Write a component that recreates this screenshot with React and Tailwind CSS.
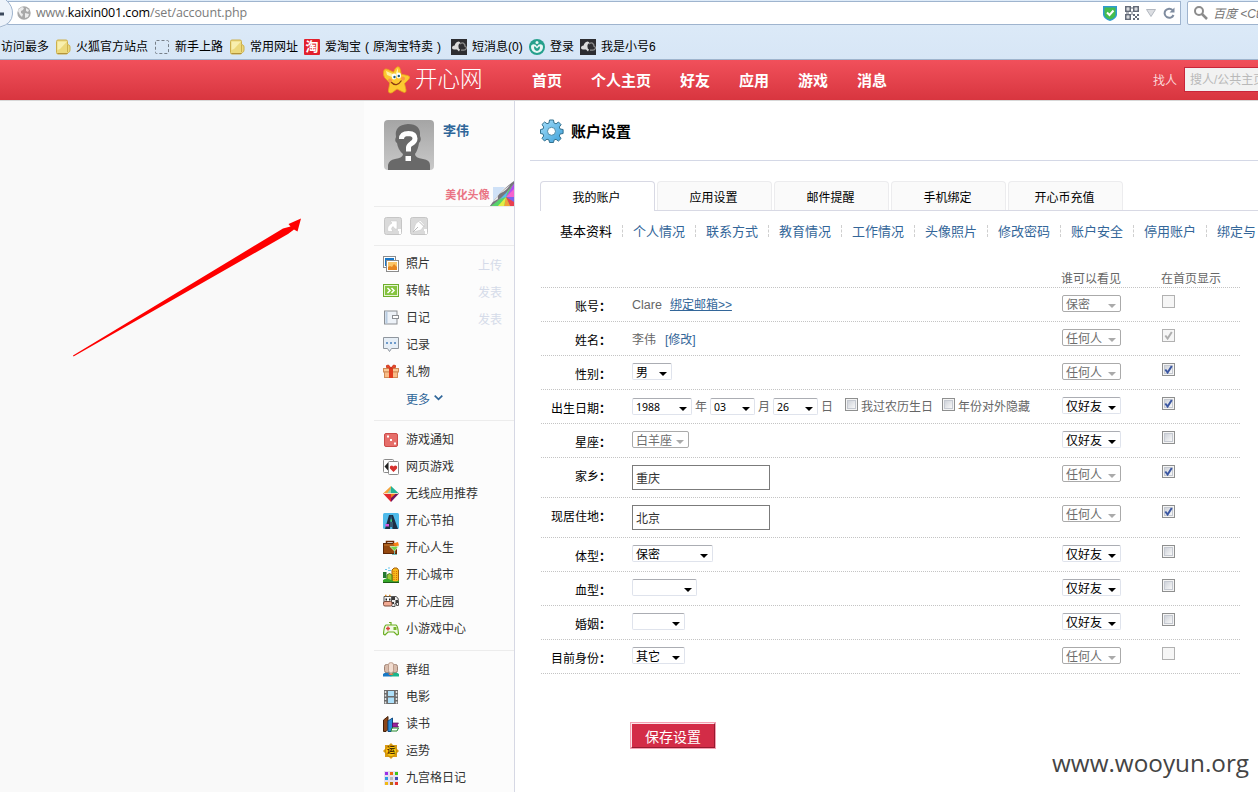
import React from "react";

const Svg = ({ w = 16, h = 16, className = "", children, vb }) => (
  <svg width={w} height={h} viewBox={vb || `0 0 ${w} ${h}`} className={`shrink-0 ${className}`}>
    {children}
  </svg>
);

/* ---------- bookmark icons ---------- */
const Folder = () => (
  <Svg w={15} h={16}>
    <path d="M.5 2.500q0-1.500 1.500-1.500h8q1.500 0 1.500 1.500v3l1.500.5q1 .5 1 2v3q0 2-1.500 2.500l-1 .5q0 1-1 1H2q-1.500 0-1.500-1.500z" fill="#ecd97c" stroke="#ccb04e" />
    <path d="M1.500 2.500h9.500L4 10l-2.500 1z" fill="#f8efae" />
    <path d="M11.500 6v7" stroke="#ccb04e" />
    <path d="M1.500 14.500h10" stroke="#b3933a" />
  </Svg>
);
const Dashed = () => (
  <Svg w={15} h={16}>
    <rect x=".5" y="1.500" width="13" height="13" rx="1" fill="none" stroke="#777f88" strokeDasharray="3 2" />
  </Svg>
);
const Tao = () => (
  <span className="flex h-4 w-4 shrink-0 items-center justify-center rounded-[1px] bg-[#e2202c] text-[13px] font-bold leading-none text-white">淘</span>
);
const Cloud = () => (
  <Svg>
    <rect width="16" height="16" fill="#2d2d31" />
    <path d="M8 12.500L6 10.500H3Q.8 10.500 1 8.500q.3-2 2.600-2Q4.500 3 7.500 2.500q1.500 0 2 1.500-2.500 1-2 4 0 2 1.500 2.500z" fill="#dcdcdc" />
    <path d="M9 5q2.500-2 4-.3 1.300 1.300.8 2.300 2 .6 1.500 2.500-.6 1.600-2.500 1.600H10" fill="none" stroke="#8b8b8b" strokeWidth="1.300" />
  </Svg>
);
const Teal = () => (
  <Svg>
    <circle cx="8" cy="8" r="8" fill="#25a08c" />
    <path d="M8 14Q2 13 2 8q0-2.800 2.700-2.800Q7 5.200 8 7.500q1-2.300 3.300-2.300Q14 5.200 14 8q0 5-6 6z" fill="#e8f7f4" />
    <path d="M5 8q0 3.500 3 4 3-.5 3-4-.5-1.500-1.500 0L8 9.500 6.500 8Q5.500 6.500 5 8z" fill="#25a08c" />
    <circle cx="8" cy="3.500" r="1.500" fill="#e8f7f4" />
  </Svg>
);

/* ---------- sidebar icons ---------- */
const Photo = () => (
  <Svg>
    <rect x=".5" y=".5" width="12" height="11" fill="#fff" stroke="#8c8c8c" />
    <rect x="2" y="2" width="9" height="8" fill="#1877c8" />
    <rect x="3.500" y="4.500" width="12" height="11" fill="#fff" stroke="#8c8c8c" />
    <rect x="5" y="6" width="9" height="8" fill="#fbc567" />
    <path d="M5 14v-3l2-1 2 1 2-3 3 3v3z" fill="#e78620" />
  </Svg>
);
const Repost = () => (
  <Svg>
    <rect x=".5" y="1.500" width="15" height="12" fill="#86c440" stroke="#6fae2c" />
    <rect x="1.500" y="2.500" width="13" height="10" fill="none" stroke="#e4f4d2" />
    <path d="M4.500 5L7 7.500 4.500 10M8.500 5L11 7.500 8.500 10" fill="none" stroke="#fff" strokeWidth="1.500" />
  </Svg>
);
const Diary = () => (
  <Svg>
    <rect x="1.500" y="1" width="12.500" height="13" fill="#edf2f8" stroke="#8b8f94" />
    <path d="M3.500 1.500v12" stroke="#b7cbe0" strokeWidth="2" />
    <rect x="9.500" y="5.500" width="6" height="3" fill="#fff" stroke="#8b8f94" />
  </Svg>
);
const Note = () => (
  <Svg>
    <path d="M.5.500h15v11H8.500l-2 3-2-3H.5z" fill="#e6eef6" stroke="#8f969e" />
    <path d="M3 5h2v2H3zM7 5h2v2H7zM11 5h2v2h-2z" fill="#6f9bcb" />
  </Svg>
);
const Gift = () => (
  <Svg>
    <rect x=".5" y="4.500" width="15" height="3.500" fill="#fbc896" stroke="#cf8b56" />
    <rect x="1.500" y="8" width="13" height="5.500" fill="#f9bd88" stroke="#cf8b56" />
    <rect x="6" y="4" width="4" height="10" fill="#e23c1e" />
    <path d="M8 4L3.500 3.500v-2L5.500 1zM8 4l4.500-.5v-2l-2-.5z" fill="#f04822" stroke="#c32b14" strokeWidth=".8" />
  </Svg>
);
const Dice = () => (
  <Svg>
    <rect x="1.500" y="1.500" width="13" height="13" rx="1.500" fill="#e66e6a" stroke="#cc4b49" />
    <path d="M4 3.500h2v2H4zM7 7h2v2H7zM11 10.500h2v2h-2z" fill="#fff" />
  </Svg>
);
const Cards = () => (
  <Svg>
    <rect x=".5" y=".5" width="10" height="13" rx="1" fill="#fff" stroke="#8b8b8b" />
    <path d="M1.500 7.500l3.500-4v8z" fill="#222" />
    <rect x="5.500" y="2.500" width="10" height="13" rx="1" fill="#fff" stroke="#8b8b8b" />
    <path d="M10.500 13L7 9.500Q6.300 6.500 9 6.500l1.500 1 1.500-1q2.700 0 2 3z" fill="#d6312e" />
  </Svg>
);
const Gem = () => (
  <Svg>
    <path d="M8 0L0 7.500h8z" fill="#f6a33b" />
    <path d="M8 0l8 7.500H8z" fill="#21b295" />
    <path d="M0 7.500h8V16z" fill="#e3292f" />
    <path d="M8 7.500h8L8 16z" fill="#75145f" />
    <path d="M4 7.500L8 2v5.500z" fill="#8fd4ae" />
    <path d="M8 7.500h5L8 12z" fill="#ef7c1c" />
    <path d="M1 7.500h14" stroke="#fff3cf" strokeWidth=".8" />
  </Svg>
);
const Beat = () => (
  <Svg>
    <rect width="16" height="16" rx="1.500" fill="#4fbaea" />
    <path d="M6 2h2L7 16H2zM8 2h2l5 14H9.500z" fill="#1d2f45" />
    <path d="M7 9h3v5H7z" fill="#35586f" />
    <path d="M7.500 6.500h1.500v2H7.500z" fill="#40d56b" />
    <path d="M2.500 11H6v2.500H2.500z" fill="#d952da" />
  </Svg>
);
const Life = () => (
  <Svg>
    <path d="M3.500 4V1.500h7V4" fill="none" stroke="#6b2c08" strokeWidth="1.500" />
    <rect x=".5" y="3.500" width="13" height="10" fill="#94480f" stroke="#5e2705" />
    <path d="M1 5h12" stroke="#c97a2d" />
    <path d="M7 6.500h8.500L11.500 11z" fill="#6ed84c" stroke="#d9f8ca" strokeWidth=".8" />
    <path d="M11.500 11v3" stroke="#72b9b4" />
    <path d="M9 14.500h5" stroke="#72b9b4" />
    <path d="M10 3.500l5-1.500 1 3.500-4 1z" fill="#f88416" />
  </Svg>
);
const City = () => (
  <Svg>
    <path d="M9 3l2-2h3l1.500 2v12H9z" fill="#f8b91d" stroke="#a55f0a" />
    <path d="M11 4v9M13.500 4v9" stroke="#d56c0c" strokeDasharray="1 1" />
    <path d="M4 8l2.500-1.500L9 8v7H4z" fill="#9cc93a" stroke="#4f7d12" />
    <path d="M0 5h3.500v6H0z" fill="#247831" />
    <path d="M0 13q3-3 8 0t8 0v3H0z" fill="#35a629" />
    <path d="M2 2.500h2M5 1h2M5 3.500h3" stroke="#6cc8eb" />
    <path d="M0 15.500h16" stroke="#1c5a16" />
  </Svg>
);
const Cow = () => (
  <Svg>
    <path d="M6 2.500h7q2.500 1 2.500 4v5h-2v-2h-1.500v3H9z" fill="#eee" stroke="#555" />
    <path d="M9 3h3v3H9zM12.500 6H15v3h-2.500zM9 8h2v2H9z" fill="#3a3a3a" />
    <path d="M1 2.500h7.500v7H1z" fill="#fafafa" stroke="#555" />
    <path d="M2.500 4.500H4v2H2.500zM6 4.500h1.500v2H6z" fill="#222" />
    <rect x=".5" y="7.500" width="8.500" height="4.500" rx="1.500" fill="#f2ab94" stroke="#7c4a3b" />
    <path d="M2 1.500h1.500M6 1.500h1.500" stroke="#e29125" strokeWidth="1.500" />
  </Svg>
);
const Pad = () => (
  <Svg>
    <path d="M3 4h10q2 1 2.500 9l-1.500 1-3-3H5l-3 3-1.500-1Q1 5 3 4z" fill="#f1fae6" stroke="#6cae23" strokeWidth="1.200" />
    <path d="M8 4V1.500H6" fill="none" stroke="#6cae23" strokeWidth="1.200" />
    <path d="M5 5.500v4M3 7.500h4" stroke="#d9443e" strokeWidth="1.500" />
    <path d="M10.500 6h3v3h-3z" fill="#77b52c" />
  </Svg>
);
const Group = () => (
  <Svg>
    <path d="M0 14.500V12l3-2h4l1.500 4.500z" fill="#1878c4" />
    <path d="M7.500 14.500L9 10h4l3 2v2.500z" fill="#19b58c" />
    <path d="M5 11.500h6L9.500 13h-3z" fill="#e9783d" />
    <rect x="1.500" y="2.500" width="5" height="8" rx="2" fill="#d8bcac" stroke="#a08273" />
    <rect x="9.500" y="2.500" width="5" height="8" rx="2" fill="#d8bcac" stroke="#a08273" />
    <rect x="5.500" y=".7" width="5" height="10" rx="2" fill="#f1dcd0" stroke="#bd9d8c" />
  </Svg>
);
const Film = () => (
  <Svg>
    <rect x="1" y="1" width="14" height="14" fill="#6c6c6c" />
    <path d="M5 2h6v5H5zM5 8.500h6V14H5z" fill="#aee0fa" />
    <path d="M2.500 2v13M13.500 2v13" stroke="#e4e4e4" strokeWidth="1.500" strokeDasharray="2 1.500" />
  </Svg>
);
const Books = () => (
  <Svg>
    <path d="M.5 4L5 .5v13l-2 2H.5z" fill="#8b4619" stroke="#43200a" />
    <path d="M5 5l4.500-3v11L8 15.500H5z" fill="#2a8bd8" stroke="#134c82" />
    <path d="M9.500 7h6L14 9l1.500 2h-6z" fill="#9c219b" stroke="#550c56" strokeWidth=".7" />
    <path d="M9 12h6.500L14 15H8z" fill="#fff" stroke="#22862d" />
  </Svg>
);
const Luck = () => (
  <span className="relative flex h-4 w-4 shrink-0 items-center justify-center">
    <Svg className="absolute left-0 top-0">
      <path d="M8 0l2 2h4v4l2 2-2 2v4h-4l-2 2-2-2H2v-4L0 8l2-2V2h4z" fill="#d99b16" />
      <circle cx="8" cy="8" r="5.500" fill="#fdc60b" stroke="#b67d08" strokeWidth=".7" />
    </Svg>
    <span className="relative text-[8px] font-bold leading-none text-[#4a2d00]">运</span>
  </span>
);
const Nine = () => {
  const c = ["#9b30e6", "#ef6a12", "#3fc516", "#2b9fe0", "#b9b9b9", "#3f4db4", "#f0ba14", "#b8740a", "#e8352c"];
  return (
    <Svg>
      <path d="M1 1h14v14H1z" fill="#e6dff0" />
      {c.map((f, i) => (
        <rect key={i} x={2 + (i % 3) * 5} y={2 + Math.floor(i / 3) * 5} width="3" height="3" fill={f} />
      ))}
    </Svg>
  );
};

const Item = ({ icon, text, extra }) => (
  <div className="flex h-[27px] items-center">
    {icon}
    <span className="ml-[7px]">{text}</span>
    {extra && <span className="ml-auto mr-3 pt-1 text-[#d5dbe9]">{extra}</span>}
  </div>
);

/* ---------- form controls ---------- */
const Sel = ({ text, off, cls }) => (
  <div
    className={`flex h-[17px] shrink-0 items-center justify-between rounded-[2px] border bg-white pl-[3px] pr-[4px] leading-none ${
      off ? "border-[#aaaaaa] text-[#6d6d6d]" : "border-[#dfe3ec] border-t-[#abadb3] text-black"
    } ${cls}`}
  >
    <span className="whitespace-nowrap pt-[2px]">{text}</span>
    <Svg w={8} h={4} className="mt-[5px]">
      <path d="M0 0h8L4 4z" fill={off ? "#aaa" : "#000"} />
    </Svg>
  </div>
);
const Box = ({ on, off }) => (
  <div className={`flex h-[13px] w-[13px] shrink-0 items-center justify-center border ${off ? "border-[#b1b1b1] bg-[#f6f6f6]" : "border-[#8e8f8f] bg-[#f4f4f4]"}`}>
    <div className={`h-[9px] w-[9px] ${off ? "" : "border border-[#c5c9d1] bg-linear-to-br from-[#cfd3da] to-[#f8f8f8]"}`}>
      {on && (
        <Svg w={9} h={9} className={off ? "" : "-ml-px -mt-px"}>
          <path d="M1.300 4.500l2.300 3L7.800 1" fill="none" stroke={off ? "#aeaeae" : "#3b57a2"} strokeWidth="2" />
        </Svg>
      )}
    </div>
  </div>
);
const Field = ({ text }) => (
  <div className="flex h-[25px] w-[138px] items-center border border-[#7b7b7b] bg-white pl-[3px] pt-[3px] text-[#333]">{text}</div>
);

const Row = ({ label, children, who, whoOff, on, boxOff, tall }) => (
  <div className={`flex border-b border-dotted border-[#c4c4c4] ${tall ? "h-10" : "h-[34px]"}`}>
    <div className="w-[70px] shrink-0 whitespace-nowrap pt-[12px] text-right leading-[14px] text-black">
      {label}<span className="font-bold">：</span>
    </div>
    <div className="ml-[21px] flex w-[430px] shrink-0 items-start pt-[7px]">{children}</div>
    <div className="w-[100px] shrink-0 pt-[7px]">
      <Sel text={who} off={whoOff} cls="w-[59px]" />
    </div>
    <div className="pt-[7px]">
      <Box on={on} off={boxOff} />
    </div>
  </div>
);

const TABS = ["应用设置", "邮件提醒", "手机绑定", "开心币充值"];
const SUBS = ["基本资料", "个人情况", "联系方式", "教育情况", "工作情况", "头像照片", "修改密码", "账户安全", "停用账户", "绑定与"];

export default function App() {
  return (
    <div className="relative flex h-[792px] w-[1258px] flex-col overflow-hidden bg-white font-['Liberation_Sans','Noto_Sans_CJK_SC',sans-serif] text-xs text-[#333]">
      {/* browser chrome */}
      <div className="h-[60px] shrink-0 overflow-hidden border-b border-[#9fb4cd] bg-linear-to-b from-[#dfecf9] to-[#d7e6f6]">
        <div className="flex h-[26px] pt-px">
          <div className="relative flex h-6 w-[1181px] shrink-0 items-center border border-l-0 border-[#9fb4ce] bg-white">
            <Svg w={14} h={28} className="absolute -top-[2px] left-0">
              <path d="M0 0h6q7 6 6.500 14Q12 25 0 28z" fill="#edf3fa" />
              <path d="M6 0q7 6 6.500 14Q12 24 0 27" fill="none" stroke="#9fb4ce" />
              <path d="M0 14h4" stroke="#3d4a5c" strokeWidth="3" />
            </Svg>
            <Svg w={14} h={14} className="ml-[17px]">
              <circle cx="7" cy="7" r="6.700" fill="#a9a9a9" />
              <path d="M2 3l3-2 2 1-1 2-2 1v2l2 1-1 3-2-2-2-4zM9 2l3 2-1 2-2-1zM8 7l4 1-1 3-3 1z" fill="#ececec" />
            </Svg>
            <span className="ml-[5px] whitespace-nowrap pt-px font-['Open_Sans','Noto_Sans',sans-serif] text-[12.500px] tracking-[-0.13px] text-[#7b7b7b]">
              www.<span className="text-black">kaixin001.com</span>/set/account.php
            </span>
            <div className="ml-auto flex items-center pr-[5px]">
              <Svg w={14} h={15}>
                <path d="M0 0h14v9q-1 4-7 6Q1 13 0 9z" fill="#2f9bd0" />
                <path d="M1.500 1.500h11V9q-1 3-5.500 4.500Q2.500 12 1.500 9z" fill="#45bd4c" />
                <path d="M4 6.500L6.500 9 10.500 4.500" fill="none" stroke="#fff" strokeWidth="2" />
              </Svg>
              <Svg w={14} h={14} className="ml-2">
                <path d="M.8.8h4.400v4.400H.8zM8.800.8h4.400v4.400H8.800zM.8 8.800h4.400v4.400H.8z" fill="none" stroke="#646b78" strokeWidth="1.600" />
                <path d="M2.500 2.500h1v1h-1zM10.500 2.500h1v1h-1zM2.500 10.500h1v1h-1zM8 8h2v2H8zM12 8h2v2h-2zM10 10h2v2h-2zM8 12h2v2H8zM12 12h2v2h-2zM6.500 1h1v2h-1zM6.500 5h1v4h-1zM1 6.500h3v1H1z" fill="#646b78" />
              </Svg>
              <Svg w={10} h={8} className="ml-[7px]">
                <path d="M.5.5h9L5 7.500z" fill="#dcdee2" stroke="#b3b8c0" />
              </Svg>
              <Svg w={12} h={12} className="ml-[7px]">
                <path d="M9.500 3A4.600 4.600 0 1 0 10.500 8" fill="none" stroke="#7f8c9f" strokeWidth="2" />
                <path d="M6.500 5.500h5V.5z" fill="#7f8c9f" />
              </Svg>
            </div>
          </div>
          <div className="ml-[6px] flex h-6 w-[80px] shrink-0 items-center overflow-hidden rounded-l-[2px] border border-[#9fb4ce] bg-white pl-[6px]">
            <Svg w={14} h={14}>
              <circle cx="5" cy="5" r="4" fill="none" stroke="#8c8c8c" strokeWidth="2" />
              <path d="M8 8l5 5" stroke="#8c8c8c" strokeWidth="2.500" />
            </Svg>
            <span className="ml-[5px] whitespace-nowrap pt-px text-xs italic text-[#777]">百度 &lt;Ctrl+K&gt;</span>
          </div>
        </div>
        <div className="flex h-[33px] items-center whitespace-nowrap pl-px pt-[8px] text-black">
          <div className="w-[55px] shrink-0">访问最多</div>
          <div className="flex w-[99px] shrink-0 items-center gap-[5px]"><Folder />火狐官方站点</div>
          <div className="flex w-[75px] shrink-0 items-center gap-[5px]"><Dashed />新手上路</div>
          <div className="flex w-[74px] shrink-0 items-center gap-[5px]"><Folder />常用网址</div>
          <div className="flex w-[147px] shrink-0 items-center gap-[5px]"><Tao /><span>爱淘宝<span className="mx-1">(</span>原淘宝特卖<span className="mx-1">)</span></span></div>
          <div className="flex w-[78px] shrink-0 items-center gap-[5px]"><Cloud />短消息(0)</div>
          <div className="flex w-[51px] shrink-0 items-center gap-[5px]"><Teal />登录</div>
          <div className="flex shrink-0 items-center gap-[5px]"><Cloud />我是小号6</div>
        </div>
      </div>

      {/* site header */}
      <div className="flex h-[40px] shrink-0 items-center bg-linear-to-b from-[#f1505b] to-[#d8353f] pl-[383px] text-white">
        <Svg w={28} h={28} className="-mt-px">
          <path d="M15 .7q1.800 0 2.300 3l1 4.500 6.200 1.300q3.500 1 1.500 3.500l-4.500 4.500 1.500 6.500q.2 3.500-3 2L14 23l-5 3.700Q5 28 5.500 24l1.300-7L1.500 11.500Q0 9 .7 5 1.500 2 5 3.500l5.500 2.700Q12.500.7 15 .7z" fill="#fcc931" stroke="#e9a51c" strokeWidth=".8" />
          <path d="M15 2l-3 7-9-4 1 4 5 2 6-2z" fill="#fff1a2" />
          <ellipse cx="11" cy="10.500" rx="2.200" ry="3" fill="#fff" />
          <ellipse cx="15.800" cy="9.500" rx="2.200" ry="3" fill="#fff" />
          <circle cx="11.500" cy="11" r="1.200" fill="#215f7c" />
          <circle cx="15.800" cy="10" r="1.200" fill="#215f7c" />
          <path d="M8 16q5.500 6 10.500-1.500" fill="none" stroke="#8a3a12" strokeWidth="1.300" />
          <circle cx="7" cy="14.500" r="2" fill="#fb9544" />
          <circle cx="20" cy="12.500" r="2" fill="#fb9544" />
        </Svg>
        <span className="ml-1 w-[67px] shrink-0 whitespace-nowrap text-[22.500px] font-light leading-none">开心网</span>
        <div className="ml-[50px] flex gap-[29px] pt-px text-[15px] font-bold leading-none">
          <span>首页</span><span>个人主页</span><span>好友</span><span>应用</span><span>游戏</span><span>消息</span>
        </div>
        <span className="ml-auto shrink-0 pt-[2px] text-[#fbd6d8]">找人</span>
        <div className="-mt-px ml-[7px] flex h-[25px] w-[74px] shrink-0 items-center overflow-hidden whitespace-nowrap border border-r-0 border-[#c8263a] bg-[#f2f2f2] pl-[5px] pt-px text-[#b9b9b9]">搜人/公共主页</div>
      </div>

      {/* page body */}
      <div className="flex min-h-0 flex-1 border-t border-[#d8d8d8]">
        <div className="w-[364px] shrink-0 bg-[#f9f9f9]" />
        <div className="w-[151px] shrink-0 border-r border-[#d6d8e4] bg-[#fcfcfc] pl-[10px]">
          <div className="flex h-[106px] flex-col border-b border-[#ececec] pl-[10px] pt-[19px]">
            <div className="flex">
              <Svg w={50} h={50}>
                <defs>
                  <linearGradient id="av" x1="0" y1="0" x2="0" y2="1">
                    <stop offset="0" stopColor="#a5a5a5" /><stop offset="1" stopColor="#c9c9c9" />
                  </linearGradient>
                </defs>
                <rect width="50" height="50" rx="4" fill="url(#av)" />
                <path d="M4 50v-5q1-5 7-6 8-1 8-5-5-4-6-11-3-2-1-6Q10 5 24 4q13 0 12 12 2 4-1 7-1 7-4 11 0 4 8 5 7 1 7 6v5z" fill="#696969" />
                <path d="M17.500 19q0-5.500 7-5.500 6.500.3 6.500 5 0 3-3.500 5-3 2-3 4v4" fill="none" stroke="#fff" strokeWidth="5" />
                <path d="M21.500 36h5.500v5h-5.500z" fill="#fff" />
              </Svg>
              <span className="ml-[9px] mt-[4px] text-[13px] font-bold leading-[14px] text-[#2f6699]">李伟</span>
            </div>
            <div className="mt-auto flex items-end justify-end">
              <span className="mb-[5px] text-[11px] font-bold leading-none tracking-[0.2px] text-[#ea7484]">美化头像</span>
              <Svg w={24} h={25}>
                <path d="M3 6h12L3 20z" fill="#cfe1f7" />
                <path d="M24 2v23H0Q14 16 24 2z" fill="#58d36b" />
                <path d="M16 16L24 2v7z" fill="#b54df1" />
                <path d="M24 8v8l-8 0z" fill="#f563cd" />
                <path d="M24 16v6l-8-6z" fill="#7a62ee" />
                <path d="M24 21v4h-4l-4-9z" fill="#e9404f" />
                <path d="M20 25h-6l2-9z" fill="#f1a03a" />
                <path d="M14 25H8l8-9z" fill="#e3ee45" />
                <path d="M16 16l-6 2 8-9z" fill="#5bb8ee" />
                <path d="M24 0v2.500Q14 16 1 25H0Q9 11 24 0z" fill="#77757d" />
                <path d="M20 4Q9 12 3 21l5-3q-1-4 3-6 5-2 9-8z" fill="#e8e8ea" />
              </Svg>
            </div>
          </div>
          <div className="flex h-[39px] items-center gap-2 border-b border-[#ececec] pl-[10px]">
            <Svg w={18} h={18}>
              <rect x=".5" y=".5" width="17" height="17" rx="2" fill="#dadada" stroke="#c6c6c6" />
              <path d="M4 14.500h5q-3-3 0-5l2 2.500h2V4H6l2 2q-6 3.500-4 8.500z" fill="#fff" stroke="#c4c4c4" strokeWidth=".5" />
              <path d="M14 12h3v5h-2v-3h-1z" fill="#fff" />
            </Svg>
            <Svg w={18} h={18}>
              <rect x=".5" y=".5" width="17" height="17" rx="2" fill="#dadada" stroke="#c6c6c6" />
              <path d="M3 15l2.500-8L10 3l4.500 5L11 13z" fill="#fff" stroke="#c4c4c4" strokeWidth=".5" />
              <path d="M3 15l5-5M9 4.500l5 5" stroke="#bbb" />
              <path d="M14 12h3v5h-2v-3h-1z" fill="#fff" />
            </Svg>
          </div>
          <div className="h-[175px] border-b border-[#ececec] pl-[9px] pt-1">
            <Item icon={<Photo />} text="照片" extra="上传" />
            <Item icon={<Repost />} text="转帖" extra="发表" />
            <Item icon={<Diary />} text="日记" extra="发表" />
            <Item icon={<Note />} text="记录" />
            <Item icon={<Gift />} text="礼物" />
            <div className="flex h-[27px] items-center pl-[23px] pt-[3px] text-[#2f6699]">
              更多
              <Svg w={9} h={6} className="-mt-[4px] ml-1"><path d="M.7.700L4.500 4.300 8.300.7" fill="none" stroke="#2f6699" strokeWidth="1.700" /></Svg>
            </div>
          </div>
          <div className="h-[230px] border-b border-[#ececec] pl-[9px] pt-[5px]">
            <Item icon={<Dice />} text="游戏通知" />
            <Item icon={<Cards />} text="网页游戏" />
            <Item icon={<Gem />} text="无线应用推荐" />
            <Item icon={<Beat />} text="开心节拍" />
            <Item icon={<Life />} text="开心人生" />
            <Item icon={<City />} text="开心城市" />
            <Item icon={<Cow />} text="开心庄园" />
            <Item icon={<Pad />} text="小游戏中心" />
          </div>
          <div className="pl-[9px] pt-[5px]">
            <Item icon={<Group />} text="群组" />
            <Item icon={<Film />} text="电影" />
            <Item icon={<Books />} text="读书" />
            <Item icon={<Luck />} text="运势" />
            <Item icon={<Nine />} text="九宫格日记" />
          </div>
        </div>

        <div className="min-w-0 flex-1 overflow-hidden pl-[15px]">
          <div className="flex h-[60px] items-center border-b border-[#d4d8e6] pl-[10px] pt-px">
            <Svg w={24} h={24}>
              <defs>
                <linearGradient id="gr" x1="0" y1="0" x2="1" y2="1">
                  <stop offset="0" stopColor="#a5defa" /><stop offset="1" stopColor="#3b9fd8" />
                </linearGradient>
              </defs>
              <path d="M9.500 1h4l.5 3 2 .8L18.500 3l2.600 2.700L19.300 8l.8 2 3 .5v4l-3 .5-.8 2 1.800 2.500-2.700 2.600L16 20.300l-2 .8-.5 2.400h-4L9 21l-2-.8L4.500 22 2 19.300 3.700 17 3 15l-2.500-.5v-4L3 10l.7-2L2 5.500 4.600 3 7 4.700 9 4z" fill="url(#gr)" stroke="#33718f" />
              <circle cx="11.500" cy="12.300" r="4" fill="#fff" stroke="#4a8aa8" />
            </Svg>
            <h1 className="ml-[7px] text-[15px] font-bold leading-none text-black">账户设置</h1>
          </div>

          <div className="mt-5 flex h-[30px] pl-[10px] text-black">
            <div className="flex w-[115px] shrink-0 items-center justify-center rounded-t-[4px] border border-b-0 border-[#d8d9e4] pr-[2px] pt-[2px]">我的账户</div>
            <div className="flex flex-1 gap-[2px] border-b border-[#d8d9e4] pl-[2px]">
              {TABS.map((t) => (
                <div key={t} className="flex w-[115px] shrink-0 items-center justify-center rounded-t-[4px] border border-b-0 border-[#ececee] bg-[#fafafa] pr-[2px] pt-[3px]">{t}</div>
              ))}
            </div>
          </div>

          <div className="flex h-10 items-center overflow-hidden pl-[30px] pt-px text-[13px]">
            {SUBS.map((t, i) => (
              <div key={t} className={`flex w-[73px] shrink-0 items-center ${i === 0 ? "text-black" : "text-[#336699]"}`}>
                <span className="w-[62px] whitespace-nowrap">{t}</span>
                <span className="h-3 border-l border-dashed border-[#cfcfcf]" />
              </div>
            ))}
          </div>

          <div className="ml-[11px] w-[699px] text-[#666]">
            <div className="flex h-[37px] items-end border-b border-dotted border-[#c4c4c4] pl-[520px]">
              <span className="w-[100px] leading-[16px]">谁可以看见</span>
              <span className="leading-[16px]">在首页显示</span>
            </div>
            <Row label="账号" who="保密" whoOff boxOff>
              <span className="pt-[2px] text-[12.500px] leading-[16px]">Clare</span>
              <span className="ml-2 pt-[2px] leading-[17px] text-[#336699] underline">绑定邮箱&gt;&gt;</span>
            </Row>
            <Row label="姓名" who="任何人" whoOff on boxOff>
              <span className="pt-[3px] leading-[16px]">李伟</span>
              <span className="ml-[9px] pt-[3px] leading-[16px] text-[#336699]">[修改]</span>
            </Row>
            <Row label="性别" who="任何人" whoOff on>
              <Sel text="男" cls="w-10" />
            </Row>
            <Row label="出生日期" who="仅好友" on>
              <div className="flex items-center whitespace-nowrap pt-px">
                <Sel text="1988" cls="w-[60px] font-['Noto_Sans'] text-[10.500px]" />
                <span className="mx-[3px] pt-px">年</span>
                <Sel text="03" cls="w-[45px] font-['Noto_Sans'] text-[10.500px]" />
                <span className="mx-[3px] pt-px">月</span>
                <Sel text="26" cls="w-[45px] font-['Noto_Sans'] text-[10.500px]" />
                <span className="ml-[3px] mr-[12px] pt-px">日</span>
                <div className="-mt-1"><Box /></div>
                <span className="ml-[3px] mr-[9px] pt-px">我过农历生日</span>
                <div className="-mt-1"><Box /></div>
                <span className="ml-[3px] pt-px">年份对外隐藏</span>
              </div>
            </Row>
            <Row label="星座" who="仅好友">
              <Sel text="白羊座" off cls="w-[57px]" />
            </Row>
            <Row label="家乡" who="任何人" whoOff on tall>
              <Field text="重庆" />
            </Row>
            <Row label="现居住地" who="任何人" whoOff on tall>
              <Field text="北京" />
            </Row>
            <Row label="体型" who="仅好友">
              <Sel text="保密" cls="w-[81px]" />
            </Row>
            <Row label="血型" who="仅好友">
              <Sel text="" cls="w-[65px]" />
            </Row>
            <Row label="婚姻" who="仅好友">
              <Sel text="" cls="w-[53px]" />
            </Row>
            <Row label="目前身份" who="任何人" whoOff boxOff>
              <Sel text="其它" cls="w-[53px]" />
            </Row>
          </div>

          <div className="ml-[100px] mt-12 h-[27px] w-[86px] border border-[#f4a0b2]">
            <div className="flex h-full items-center justify-center border border-b-[#961a30] border-l-[#fbe4e8] border-r-[#961a30] border-t-[#fbe4e8] bg-[#d32c47] pt-[2px] text-sm leading-none text-white">保存设置</div>
          </div>
        </div>
      </div>

      {/* annotation arrow and watermark lie over the page */}
      <svg width="232" height="142" viewBox="0 0 232 142" className="absolute left-[71px] top-[217px]">
        <path d="M2 138.500L212 11.500 219.500 9.500 217.500 7 230 1.500 226.500 14.500 223 12.500 217 17 2.500 139.500z" fill="#fe0000" />
      </svg>
      <div className="absolute left-[1052px] top-[745px] whitespace-nowrap font-['Open_Sans','Noto_Sans',sans-serif] text-[24.300px] leading-[36px] text-[#444]">www.wooyun.org</div>
    </div>
  );
}
